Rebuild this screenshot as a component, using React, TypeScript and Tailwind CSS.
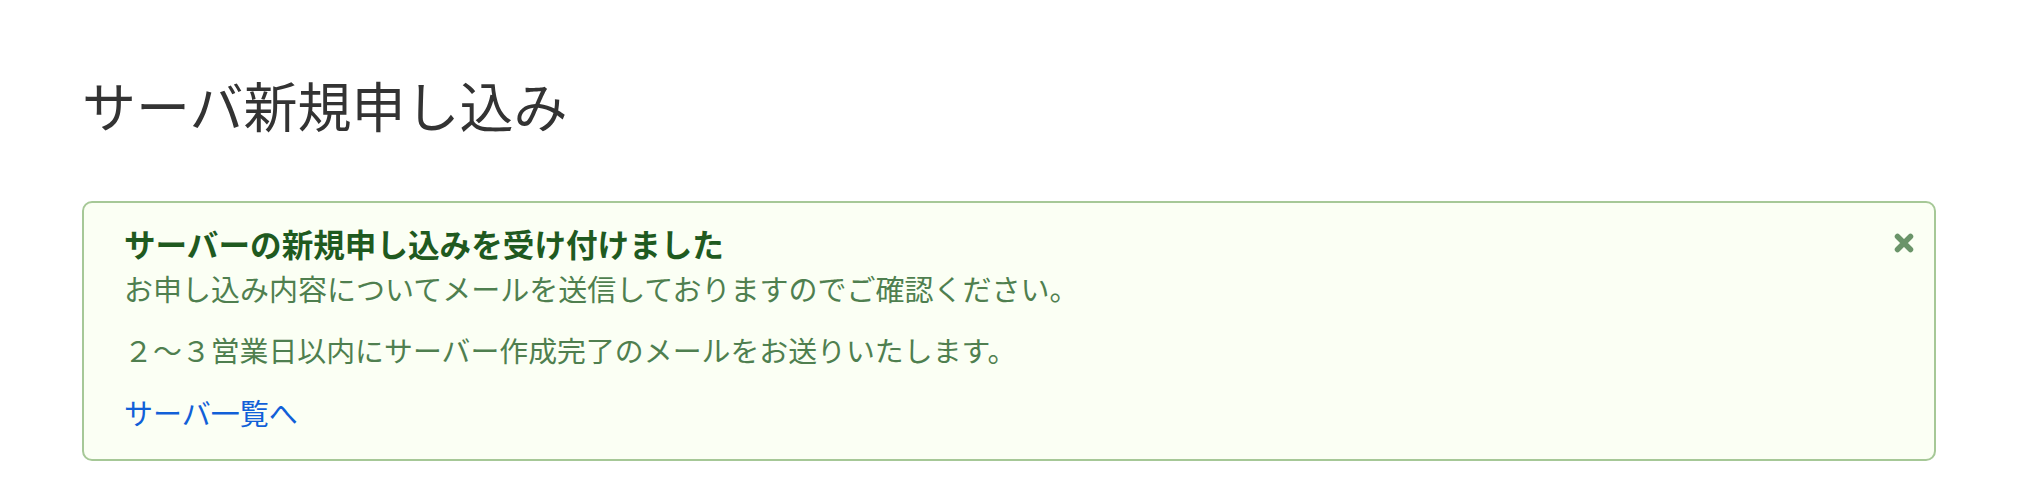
const jp = { fontFamily: '"Noto Sans CJK JP", "Noto Sans", sans-serif' };

const CloseIcon = () => (
  <svg width="22" height="22" viewBox="0 0 22 22" aria-hidden="true">
    <path
      d="M4.5 4.5 L17.5 17.5 M17.5 4.5 L4.5 17.5"
      stroke="#6a9469"
      strokeWidth="5.5"
      strokeLinecap="round"
      fill="none"
    />
  </svg>
);

const App = () => {
  return (
    <div className="min-h-[490px] w-full bg-white px-[82px] pt-[76px]" style={jp}>
      <h1 className="text-[54px] leading-[58px] font-normal text-[#333333]">
        サーバ新規申し込み
      </h1>

      <div className="relative mt-[67px] rounded-[10px] border-2 border-[#a6c897] bg-[#fbfff4] pl-[40px] pr-[40px] pt-[20px] pb-[27px]">
        <button className="absolute right-[19px] top-[29px] p-0">
          <CloseIcon />
        </button>
        <h4 className="text-[31.6px] leading-[40px] font-bold text-[#1f5a1f]">
          サーバーの新規申し込みを受け付けました
        </h4>
        <p className="mt-[5px] text-[29px] leading-[40px] text-[#4f7f4f]">
          お申し込み内容についてメールを送信しておりますのでご確認ください。
        </p>
        <p className="mt-[21px] text-[28.9px] leading-[40px] text-[#4f7f4f]">
          ２～３営業日以内にサーバー作成完了のメールをお送りいたします。
        </p>
        <p className="mt-[23px] text-[29px] leading-[40px]">
          <a href="#" className="text-[#1160d8]">
            サーバ一覧へ
          </a>
        </p>
      </div>
    </div>
  );
};

export default App;
